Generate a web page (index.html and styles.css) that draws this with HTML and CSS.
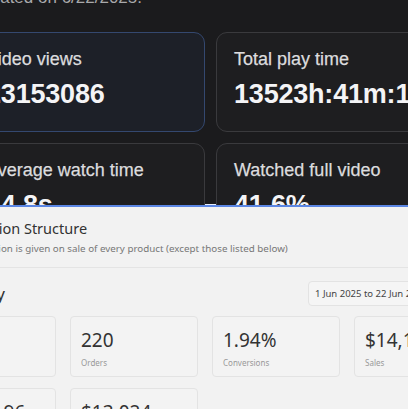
FILE: index.html
```html
<!DOCTYPE html>
<html>
<head>
<meta charset="utf-8">
<link rel="stylesheet" href="styles.css">
</head>
<body>
<section class="dark">
  <div class="dark-inner">
    <p class="updated">Updated on 6/22/2025.</p>
    <div class="metrics">
      <div class="metric metric-active">
        <div class="metric-label">Video views</div>
        <div class="metric-value">23153086</div>
      </div>
      <div class="metric">
        <div class="metric-label">Total play time</div>
        <div class="metric-value">13523h:41m:17s</div>
      </div>
      <div class="metric">
        <div class="metric-label">Average watch time</div>
        <div class="metric-value">14.8s</div>
      </div>
      <div class="metric">
        <div class="metric-label">Watched full video</div>
        <div class="metric-value">41.6%</div>
      </div>
    </div>
  </div>
</section>
<section class="light">
  <header class="structure">
    <h2 class="structure-title">Commission Structure</h2>
    <p class="structure-sub">Commission is given on sale of every product (except those listed below)</p>
  </header>
  <div class="summary">
    <div class="summary-head">
      <h3 class="summary-title">Summary</h3>
      <div class="date-range">1 Jun 2025 to 22 Jun 2025</div>
    </div>
    <div class="stats">
      <div class="stat"><div class="stat-value">149</div><div class="stat-label">Clicks</div></div>
      <div class="stat"><div class="stat-value">220</div><div class="stat-label">Orders</div></div>
      <div class="stat"><div class="stat-value">1.94%</div><div class="stat-label">Conversions</div></div>
      <div class="stat"><div class="stat-value">$14,152</div><div class="stat-label">Sales</div></div>
      <div class="stat"><div class="stat-value">$2,113.96</div><div class="stat-label">Commission</div></div>
      <div class="stat"><div class="stat-value">$13,024</div><div class="stat-label">Net sales</div></div>
    </div>
  </div>
</section>
</body>
</html>
```
FILE: styles.css
```css
* { box-sizing: border-box; }
html, body { margin: 0; padding: 0; }
body {
  width: 408px;
  height: 409px;
  overflow: hidden;
  background: #f2f2f2;
}
.dark {
  height: 205px;
  background: #1b1b1d;
  overflow: hidden;
  font-family: "Liberation Sans", Arial, sans-serif;
}
.dark-inner {
  margin-left: -32px;
  width: 520px;
}
.updated {
  margin: -12px 0 0 1px;
  font-size: 17px;
  line-height: 20px;
  color: #a9a9ab;
}
.metrics {
  margin-top: 24px;
  display: grid;
  grid-template-columns: 237px 237px;
  gap: 11px;
}
.metric {
  height: 100px;
  border: 1.5px solid #3a3a3d;
  border-radius: 11px;
  background: #1e1e20;
  padding: 16px 16px 0 17px;
}
.metric-active {
  border-color: #34486f;
  background: #1d2028;
}
.metric-label {
  font-size: 18px;
  line-height: 21px;
  color: #dcdcde;
  -webkit-text-stroke: 0.25px #dcdcde;
}
.metric-value {
  margin-top: 8px;
  font-size: 27px;
  line-height: 32px;
  font-weight: 700;
  letter-spacing: -0.2px;
  color: #f4f4f6;
  white-space: nowrap;
}
.light {
  border-top: 2px solid #5b86e4;
  box-shadow: 0 -1px 0 #e8eefb;
  height: 204px;
  background: #f2f2f2;
  font-family: "Noto Sans", "Open Sans", sans-serif;
  color: #333;
  overflow: hidden;
}
.structure {
  margin-left: -64px;
  padding-top: 12px;
  padding-bottom: 12px;
  border-bottom: 1px solid #e4e4e4;
  width: 520px;
}
.structure-title {
  margin: 0;
  font-size: 14.5px;
  line-height: 18px;
  font-weight: 400;
  color: #333;
}
.structure-sub {
  margin: 5px 0 0 20px;
  font-size: 9.8px;
  line-height: 13px;
  color: #777;
  white-space: nowrap;
}
.summary {
  margin-left: -72px;
  width: 600px;
  padding-top: 13px;
}
.summary-head {
  display: flex;
  justify-content: space-between;
  align-items: center;
  width: 512px;
}
.summary-title {
  margin: 0;
  font-size: 17px;
  line-height: 22px;
  font-weight: 400;
  color: #333;
}
.date-range {
  border: 1px solid #e3e3e3;
  border-radius: 4px;
  background: #f5f5f5;
  padding: 5px 6px;
  font-size: 9.5px;
  line-height: 13px;
  color: #444;
  white-space: nowrap;
  width: 132px;
}
.stats {
  margin-top: 10px;
  display: grid;
  grid-template-columns: repeat(4, 128px);
  gap: 11px 14px;
}
.stat {
  height: 61px;
  border: 1px solid #e3e3e3;
  border-radius: 4px;
  background: #f3f3f3;
  padding: 11px 10px 0 10px;
}
.stat-value {
  font-size: 19px;
  line-height: 24px;
  color: #333;
  white-space: nowrap;
}
.stat-label {
  margin-top: 6px;
  font-size: 8px;
  line-height: 10px;
  color: #999;
}
```
